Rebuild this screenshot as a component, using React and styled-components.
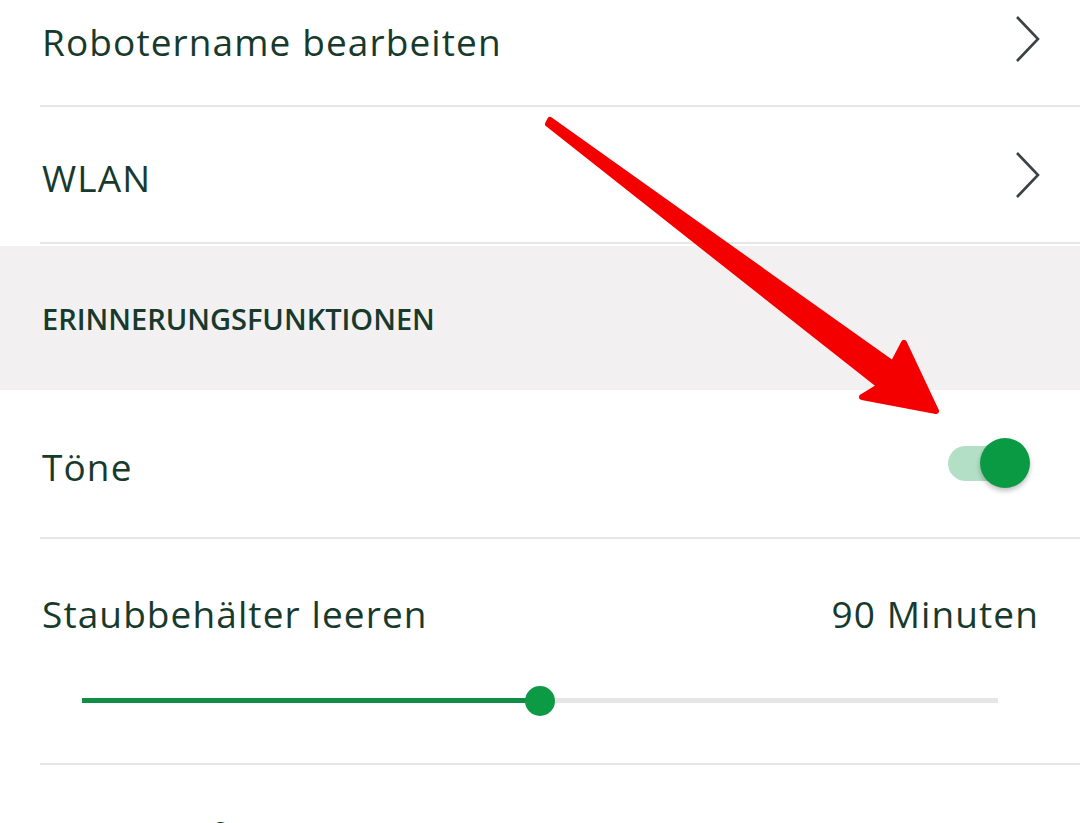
import React from 'react';
import styled, { createGlobalStyle } from 'styled-components';

const GlobalStyle = createGlobalStyle`
  html, body {
    margin: 0;
    padding: 0;
    background: #ffffff;
    overflow: hidden;
  }
  body {
    font-family: "Open Sans", Roboto, "Noto Sans", sans-serif;
    color: #173a2d;
  }
`;

const Screen = styled.div`
  position: relative;
  width: 1080px;
  height: 823px;
  overflow: hidden;
`;

const List = styled.div`
  display: flex;
  flex-direction: column;
  margin-top: -28px;
`;

const Row = styled.div`
  display: flex;
  align-items: center;
  justify-content: space-between;
  height: ${(p) => p.h || 135}px;
  margin-left: 40px;
  padding: 0 42px 0 2px;
  border-bottom: 2px solid #e6e6e6;
  box-sizing: content-box;
`;

const Label = styled.span`
  font-size: 37px;
  line-height: 1;
  letter-spacing: 1.1px;
  color: #173a2d;
  padding-top: 6px;
`;

const Value = styled(Label)`
  margin-right: -1px;
`;

const ChevronIcon = styled.svg`
  margin-right: -3px;
`;

const Chevron = () => (
  <ChevronIcon width="26" height="46" viewBox="0 0 26 46">
    <path d="M2 1 L23 23 L2 45" fill="none" stroke="#3b4245" strokeWidth="2.6" />
  </ChevronIcon>
);

const SectionHeader = styled.div`
  display: flex;
  align-items: center;
  height: 144px;
  padding: 0 0 0 42px;
  box-sizing: border-box;
  background: #f2f0f1;
  font-size: 29px;
  font-weight: 600;
  color: #173a2d;
  margin-top: 2px;
`;

const SliderRow = styled.div`
  display: flex;
  flex-direction: column;
  margin-left: 40px;
  padding: 50px 42px 0 2px;
  height: 174px;
  border-bottom: 2px solid #e6e6e6;
`;

const SliderHead = styled.div`
  display: flex;
  justify-content: space-between;
  align-items: center;
`;

const Track = styled.div`
  position: relative;
  margin: 66px 40px 0 40px;
  height: 5px;
  background: #e5e5e5;
`;

const TrackFill = styled.div`
  height: 100%;
  background: #0f8f45;
`;

const Thumb = styled.div`
  position: absolute;
  top: 50%;
  width: 30px;
  height: 30px;
  margin: -15px 0 0 -15px;
  border-radius: 50%;
  background: #0c9a45;
`;

const Toggle = styled.div`
  position: relative;
  width: 82px;
  height: 52px;
  margin-right: 8px;
`;

const ToggleTrack = styled.div`
  position: absolute;
  left: 0;
  top: 8px;
  width: 76px;
  height: 35px;
  border-radius: 18px;
  background: #b3dfc6;
`;

const ToggleKnob = styled.div`
  position: absolute;
  right: 0;
  top: 0;
  width: 50px;
  height: 50px;
  border-radius: 50%;
  background: #0b9a44;
  box-shadow: 0 3px 5px rgba(0, 0, 0, 0.25);
`;

const Arrow = styled.svg`
  position: absolute;
  left: 0;
  top: 0;
  pointer-events: none;
`;

function Slider({ value }) {
  return (
    <Track>
      <TrackFill style={{ width: `${value}%` }} />
      <Thumb style={{ left: `${value}%` }} />
    </Track>
  );
}

export default function App() {
  return (
    <Screen>
      <GlobalStyle />
      <List>
        <Row h={133}>
          <Label>Robotername bearbeiten</Label>
          <Chevron />
        </Row>
        <Row>
          <Label>WLAN</Label>
          <Chevron />
        </Row>
        <SectionHeader>ERINNERUNGSFUNKTIONEN</SectionHeader>
        <Row h={147}>
          <Label>Töne</Label>
          <Toggle>
            <ToggleTrack />
            <ToggleKnob />
          </Toggle>
        </Row>
        <SliderRow>
          <SliderHead>
            <Label>Staubbehälter leeren</Label>
            <Value>90 Minuten</Value>
          </SliderHead>
          <Slider value={50} />
        </SliderRow>
        <Row>
          <Label>Filter prüfen</Label>
          <Value>150 Stunden</Value>
        </Row>
      </List>
      <Arrow width="1080" height="823" viewBox="0 0 1080 823">
        <polygon
          points="550,120 893,364 904,343 936,411 862,397 880,386 548,124"
          fill="#f40000"
          stroke="#f40000"
          strokeWidth="6"
          strokeLinejoin="round"
        />
      </Arrow>
    </Screen>
  );
}
